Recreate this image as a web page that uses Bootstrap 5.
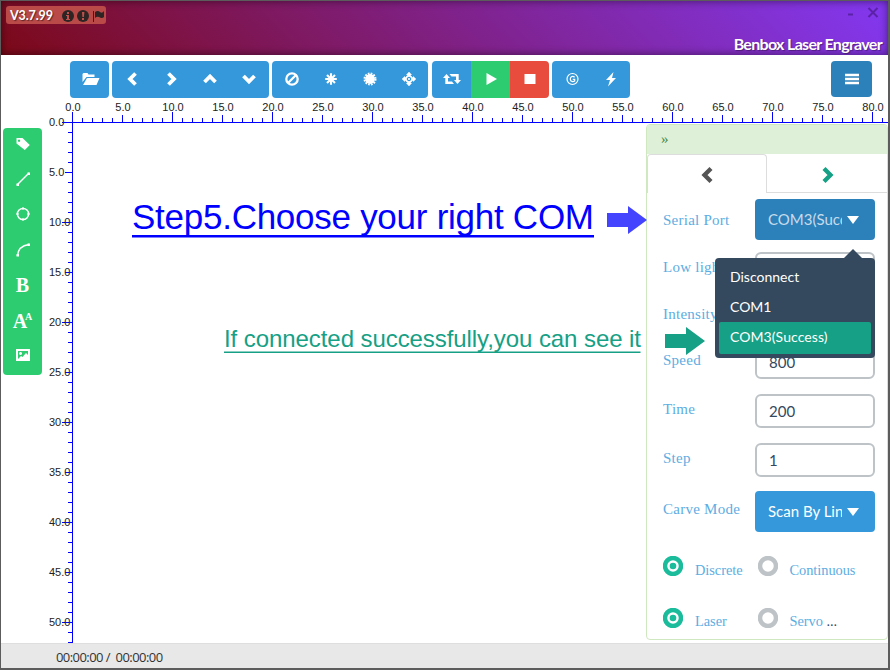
<!DOCTYPE html>
<html lang="en">
<head>
<meta charset="utf-8">
<meta name="viewport" content="width=device-width, initial-scale=1">
<title>Benbox Laser Engraver</title>
<link href="https://cdn.jsdelivr.net/npm/bootstrap@5.3.0/dist/css/bootstrap.min.css" rel="stylesheet">
<style>
body{font-family:Lato,sans-serif;font-size:14px;line-height:1.2;color:#34495e}
svg{display:block;flex:none}
.app-window{width:890px;height:670px;border:1px solid #5c5c5c;border-right-width:2px;border-bottom-width:2px}
.title-bar{height:54px;background:linear-gradient(45deg,#7c0918,#8338f2);box-shadow:inset 0 0 9px rgba(0,0,0,.5);color:#fff}
.version-tag{height:18px;width:100px;margin:5px 0 0 5px;padding-left:4px;background:#b94a48;border-radius:3px;font-size:12.5px;letter-spacing:-.1px;font-weight:700;text-shadow:1px 1px 1px rgba(0,0,0,.5)}
.app-name{font-size:16px;font-weight:700;letter-spacing:-.68px;margin:0 6px 2px 0;text-shadow:1px 1px 1px rgba(0,0,0,.35)}
.win-controls{color:#5b22a8;margin:4px 8px 0 0}
.tool-row{height:69px;padding:6px 16px 0 69px}
.tool-group{border-radius:4px;overflow:hidden;height:37px;margin-right:3px}
.tool-group.wide-gap{margin-right:4px}
.tool-btn{width:39px;height:37px;padding:0;border:0;border-radius:0;background:#3498db;color:#fff;display:flex;align-items:center;justify-content:center}
.tool-btn.last{width:40px}
.tool-btn svg{margin-top:-1px}
.tool-btn.go{background:#2ecc71}.tool-btn.halt{background:#e74c3c}
.menu-btn{width:41px;height:36px;background:#2c81ba;border-radius:4px}
.side-tools{width:39px;height:247px;margin:4px 0 0 2px;padding-bottom:3px;background:#2ecc71;border-radius:4px}
.side-tools .tool-btn{background:none;height:35.2px;flex:none;padding-bottom:2px}
.glyph-serif{font:700 20px/1 "Liberation Serif",serif}
.glyph-main{letter-spacing:-1px}
.glyph-sup{font-size:10px;margin:0 0 8px -1px}
.work-canvas{left:0;top:0;z-index:0}
.callouts{left:0;top:0;z-index:5;pointer-events:none}
.settings{width:242px;height:516px;background:#fff;border:1px solid #d0e8c0;border-radius:4px}
.settings>*{flex-shrink:0}
.settings-head{height:28.5px;background:#dff0d8;color:#468847;font:15px/1 "Liberation Serif",serif;padding-left:14px}
.settings-tabs{height:39.500px}
.tab-on{width:120px;border:1px solid #ddd;border-bottom:0;border-radius:4px 4px 0 0;color:#555;padding-top:3px}
.tab-off{border-bottom:1px solid #ddd;color:#16a085;padding:4px 0 0 2px}
.form-line{padding:0 12px 0 16px}
.h53{height:53px}.h46{height:46px}.h48{height:48px}.h44{height:44px}.h54{height:54px}.h59{height:59px}.h50{height:50px}
.field-label{font:15px/18px "Liberation Serif",serif;letter-spacing:.25px;color:#5dade2;padding-bottom:5px;white-space:nowrap}
.field-label.mid{padding-bottom:0;padding-top:1px}
.field-input{width:120px;height:34px;padding:0 12px;border:2px solid #bdc3c7;border-radius:6px;font-size:15px;color:#34495e}
.pick-btn{width:120px;height:41px;padding:0 16px 0 13px;border:0;border-radius:4px;background:#3498db;color:#fff;font-size:15px}
.pick-btn.opened{background:#2c81ba;color:#c6dbeb}
.pick-text{width:74px;overflow:hidden;white-space:nowrap;text-align:left}
.choice{width:94.5px;gap:12px}
.choice .field-label{padding:7px 0 0;font-size:14.4px;letter-spacing:-.05px}
.dots{color:#34495e}
.port-menu{left:714px;top:203px;z-index:4;width:160px;height:100px;background:#34495e;border-radius:4px;padding:4px;color:#fff}
.port-menu::before{content:"";position:absolute;top:-9px;right:13px;border:9px solid transparent;border-top:0;border-bottom-color:#34495e}
.port-item{height:30px;padding-left:11px;font-size:14px}
.port-item.chosen{height:32px;background:#16a085;border-radius:2px;padding-bottom:2px;letter-spacing:.08px}
.status-bar{height:25px;background:#e8e8e8;border-top:1px solid #dedede;padding:3px 0 0 55px;font:13px/1 "Open Sans",sans-serif;color:#333;letter-spacing:-.56px}
.tick-text{font:11px "Liberation Sans",sans-serif;fill:#222}
</style>
<script src="https://cdn.jsdelivr.net/npm/bootstrap@5.3.0/dist/js/bootstrap.bundle.min.js"></script>
</head>
<body class="overflow-hidden">
<div class="app-window d-flex flex-column bg-white overflow-hidden">
  <header class="title-bar d-flex justify-content-between flex-shrink-0">
    <div class="version-tag d-flex align-items-center"><span>V3.7.99</span>
      <svg class="ms-auto" width="47" height="18" viewBox="0 0 47 18"><g fill="#2e2424"><circle cx="9" cy="10" r="6"/><circle cx="24" cy="10" r="6"/><path d="M34 5h1v11h-1zM36 6q3-2 5 0t4-1v6q-2 2-5 0-2-1-4 1z"/></g><path d="M8 6h2v2H8zm-1 3h3v4h1v1H7v-1h1v-3H7zM23 6h2.400l-.5 5h-1.500zm0 6h2v2h-2z" fill="#c0504b"/></svg>
    </div>
    <div class="d-flex flex-column justify-content-between align-items-end">
      <svg class="win-controls" width="34" height="14" viewBox="0 0 34 14"><path d="M2 9.500h5M22.500 3l9 9m0-9l-9 9" fill="none" stroke="currentColor" stroke-width="2"/></svg>
      <div class="app-name">Benbox Laser Engraver</div>
    </div>
  </header>

  <main class="position-relative flex-grow-1">
    <svg class="work-canvas position-absolute" width="887" height="588" viewBox="1 55 887 588">
      <path id="ticks" fill="none" stroke="#00f" shape-rendering="crispEdges"/>
      <g id="tickLabels" class="tick-text"></g>
    </svg>

    <div class="tool-row position-relative d-flex align-items-start">
      <div class="tool-group d-flex">
        <button class="tool-btn btn"><svg width="20" height="14" viewBox="-1.500 0 20 14"><path d="M1 10V2l1-1h4l1 1.500h6V5H5zM5.500 6H18l-3 7H1.500z" fill="currentColor"/></svg></button>
      </div>
      <div class="tool-group d-flex">
        <button class="tool-btn btn"><svg width="16" height="16"><path d="M11.500 2.500L6 8l5.500 5.500" fill="none" stroke="currentColor" stroke-width="3.800"/></svg></button>
        <button class="tool-btn btn"><svg width="16" height="16"><path d="M5.500 2.500L11 8l-5.500 5.500" fill="none" stroke="currentColor" stroke-width="3.800"/></svg></button>
        <button class="tool-btn btn"><svg width="16" height="16"><path d="M2.500 11L8 5.500l5.500 5.500" fill="none" stroke="currentColor" stroke-width="3.800"/></svg></button>
        <button class="tool-btn last btn"><svg width="16" height="16"><path d="M2.500 5L8 10.500 13.500 5" fill="none" stroke="currentColor" stroke-width="3.800"/></svg></button>
      </div>
      <div class="tool-group wide-gap d-flex">
        <button class="tool-btn btn"><svg width="16" height="16"><g fill="none" stroke="currentColor" stroke-width="2.300"><circle cx="8" cy="8" r="5.700"/><path d="M4 12l8-8"/></g></svg></button>
        <button class="tool-btn btn"><svg width="16" height="16"><path d="M8 2.200v11.600M2.200 8h11.600M4 4l8 8m0-8l-8 8" stroke="currentColor" stroke-width="2.100"/></svg></button>
        <button class="tool-btn btn"><svg width="16" height="16"><circle cx="8" cy="8" r="4.900" fill="currentColor"/><circle cx="8" cy="8" r="5.500" fill="none" stroke="currentColor" stroke-width="2" stroke-dasharray="1.700 1.180"/></svg></button>
        <button class="tool-btn btn"><svg width="16" height="16"><path d="M8 .8l3 3.200H5zM8 15.200l3-3.200H5zM.8 8L4 5v6zM15.200 8L12 5v6z" fill="currentColor"/><path d="M8 3v3M8 10v3M3 8h3M10 8h3" stroke="currentColor" stroke-width="1.600"/><path d="M8 3.800L12.200 8 8 12.200 3.800 8z" fill="none" stroke="currentColor" stroke-width="1.700"/><circle cx="8" cy="8" r="1.100" fill="currentColor"/></svg></button>
      </div>
      <div class="tool-group d-flex">
        <button class="tool-btn btn"><svg width="18" height="16" viewBox="0 0 18 16"><path d="M3.500 3L0 7h2.300v6H11l-2-2.400H5V7h2zM6.500 3h9.200v6H18l-3.500 4L11 9h2V5.400H8.500z" fill="currentColor"/></svg></button>
        <button class="tool-btn btn go"><svg width="16" height="16"><path d="M3.500 2L14 8 3.500 14z" fill="currentColor"/></svg></button>
        <button class="tool-btn btn halt"><svg width="16" height="16"><path d="M2.500 3h11v10h-11z" fill="currentColor"/></svg></button>
      </div>
      <div class="tool-group d-flex">
        <button class="tool-btn btn"><svg width="18" height="16" viewBox="-1.500 0 18 16"><g fill="none" stroke="currentColor"><circle cx="8" cy="8" r="5.500" stroke-width="1.200"/><path d="M10.200 6.300Q8 4.400 6.300 6.300q-1.100 1.800 0 3.500 1.900 1.500 3.900.2V8.400H8.300" stroke-width="1.200"/></g></svg></button>
        <button class="tool-btn btn"><svg width="16" height="16"><path d="M10.500 1L3 9h4l-2 6.500L13 7H9z" fill="currentColor"/></svg></button>
      </div>
      <button class="tool-btn menu-btn btn ms-auto"><svg width="14" height="12"><path d="M0 2h14M0 6h14M0 10h14" stroke="currentColor" stroke-width="2.700"/></svg></button>
    </div>

    <div class="position-relative d-flex justify-content-between align-items-start">
      <nav class="side-tools d-flex flex-column">
        <button class="tool-btn btn"><svg width="16" height="16"><path d="M1.500 2H7.500l7.300 7-5 5L1.500 7.500zM4 3.500a1.200 1.200 0 1 0 .1 0z" fill="currentColor" fill-rule="evenodd"/></svg></button>
        <button class="tool-btn btn"><svg width="16" height="16"><path d="M2 14L14 2" stroke="currentColor" stroke-width="1.500"/><path d="M1.500 12.500h2.500v2.500H1.500zM12.500 1.500h2.500v2.500h-2.500z" fill="currentColor"/></svg></button>
        <button class="tool-btn btn"><svg width="16" height="16"><circle cx="8" cy="8" r="5.600" fill="none" stroke="currentColor" stroke-width="1.500"/><path d="M7 1.500h2v2H7zM7 12.500h2v2H7zM1.500 7h2v2h-2zM12.500 7h2v2h-2z" fill="currentColor"/></svg></button>
        <button class="tool-btn btn"><svg width="16" height="16"><path d="M2.500 14Q3 4 14 2.500" fill="none" stroke="currentColor" stroke-width="1.500"/><path d="M1.500 12h2.500v2.500H1.500zM12.500 1.500h2.500v2.500h-2.500z" fill="currentColor"/></svg></button>
        <button class="tool-btn btn glyph-serif">B</button>
        <button class="tool-btn btn glyph-serif"><span class="glyph-main">A</span><span class="glyph-sup">A</span></button>
        <button class="tool-btn btn"><svg width="16" height="16"><path d="M1 2h14v12H1zM3 4v8l3-3 1.500 1L11 6l2 2V4zM5.500 5a1.500 1.500 0 1 0 .1 0z" fill="currentColor" fill-rule="evenodd"/></svg></button>
      </nav>

      <section class="settings d-flex flex-column overflow-hidden">
        <div class="settings-head d-flex align-items-center">»</div>
        <div class="settings-tabs d-flex">
          <div class="tab-on d-flex align-items-center justify-content-center"><svg width="18" height="18"><path d="M13 2.500L6.500 9l6.500 6.500" fill="none" stroke="currentColor" stroke-width="4.300"/></svg></div>
          <div class="tab-off flex-grow-1 d-flex align-items-center justify-content-center"><svg width="18" height="18"><path d="M5 2.500L11.500 9 5 15.500" fill="none" stroke="currentColor" stroke-width="4.300"/></svg></div>
        </div>
        <div class="form-line h53 d-flex align-items-center justify-content-between"><span class="field-label mid">Serial Port</span>
          <button class="pick-btn opened btn d-flex align-items-center justify-content-between"><span class="pick-text">COM3(Success)</span><svg width="12" height="8"><path d="M0 0h12L6 8z" fill="#fff"/></svg></button></div>
        <div class="form-line h46 d-flex align-items-center justify-content-between"><span class="field-label">Low light</span><input class="field-input form-control" value="10"></div>
        <div class="form-line h48 d-flex align-items-center justify-content-between"><span class="field-label">Intensity</span><input class="field-input form-control" value="255"></div>
        <div class="form-line h44 d-flex align-items-center justify-content-between"><span class="field-label">Speed</span><input class="field-input form-control" value="800"></div>
        <div class="form-line h54 d-flex align-items-center justify-content-between"><span class="field-label">Time</span><input class="field-input form-control" value="200"></div>
        <div class="form-line h44 d-flex align-items-center justify-content-between"><span class="field-label">Step</span><input class="field-input form-control" value="1"></div>
        <div class="form-line h59 d-flex align-items-center justify-content-between"><span class="field-label">Carve Mode</span>
          <button class="pick-btn btn d-flex align-items-center justify-content-between"><span class="pick-text">Scan By Lin</span><svg width="12" height="8"><path d="M0 0h12L6 8z" fill="#fff"/></svg></button></div>
        <div class="form-line h50 d-flex align-items-center">
          <label class="choice d-flex align-items-center"><svg width="20" height="20"><circle cx="10" cy="10" r="8" fill="none" stroke="#1abc9c" stroke-width="4.500"/><circle cx="10" cy="10" r="3.300" fill="#1abc9c"/></svg><span class="field-label">Discrete</span></label>
          <label class="choice d-flex align-items-center"><svg width="20" height="20"><circle cx="10" cy="10" r="8" fill="none" stroke="#bdc3c7" stroke-width="4.500"/></svg><span class="field-label">Continuous</span></label>
        </div>
        <div class="form-line h53 d-flex align-items-center">
          <label class="choice d-flex align-items-center"><svg width="20" height="20"><circle cx="10" cy="10" r="8" fill="none" stroke="#1abc9c" stroke-width="4.500"/><circle cx="10" cy="10" r="3.300" fill="#1abc9c"/></svg><span class="field-label">Laser</span></label>
          <label class="choice d-flex align-items-center"><svg width="20" height="20"><circle cx="10" cy="10" r="8" fill="none" stroke="#bdc3c7" stroke-width="4.500"/></svg><span class="field-label">Servo <span class="dots">...</span></span></label>
        </div>
      </section>
    </div>

    <div class="port-menu position-absolute">
      <div class="port-item d-flex align-items-center">Disconnect</div>
      <div class="port-item d-flex align-items-center">COM1</div>
      <div class="port-item chosen d-flex align-items-center">COM3(Success)</div>
    </div>

    <svg class="callouts position-absolute" width="887" height="588" viewBox="1 55 887 588" font-family="Liberation Sans, sans-serif">
      <text x="132" y="229" font-size="35" fill="#00f" textLength="462" lengthAdjust="spacing">Step5.Choose your right COM</text>
      <path d="M132 236.200h462" stroke="#00f" stroke-width="2.500"/>
      <path d="M607 213h21v-7l19 14-19 14v-7h-21z" fill="#44f"/>
      <text x="224" y="347" font-size="24" fill="#16a085" textLength="417" lengthAdjust="spacing">If connected successfully,you can see it</text>
      <path d="M224 352.300h416.500" stroke="#16a085" stroke-width="1.600"/>
      <path d="M665 334h21v-7l19 14-19 14v-7h-21z" fill="#16a085"/>
    </svg>
  </main>

  <footer class="status-bar d-flex align-items-center flex-shrink-0">00:00:00 /&nbsp; 00:00:00</footer>
</div>
<script>
// Ruler: one minor tick per unit (10px), longer ones at every 5 and 10 units.
let d = 'M62 122.5H888M72.5 112V643', labels = '';
const len = i => i % 10 === 0 ? 10 : i % 5 === 0 ? 7 : 4;
for (let i = 0; i <= 81; i++) {
  const x = 72.5 + i * 10;
  d += `M${x} 122V${122 - len(i)}`;
  if (i % 5 === 0) labels += `<text x="${x + .5}" y="111" text-anchor="middle">${i}.0</text>`;
}
for (let i = 0; i <= 52; i++) {
  const y = 122.5 + i * 10;
  d += `M72 ${y}H${72 - len(i)}`;
  if (i % 5 === 0) labels += `<text x="49" y="${y + 3.5}">${i}.0</text>`;
}
document.getElementById('ticks').setAttribute('d', d);
document.getElementById('tickLabels').innerHTML = labels;
</script>
</body>
</html>
